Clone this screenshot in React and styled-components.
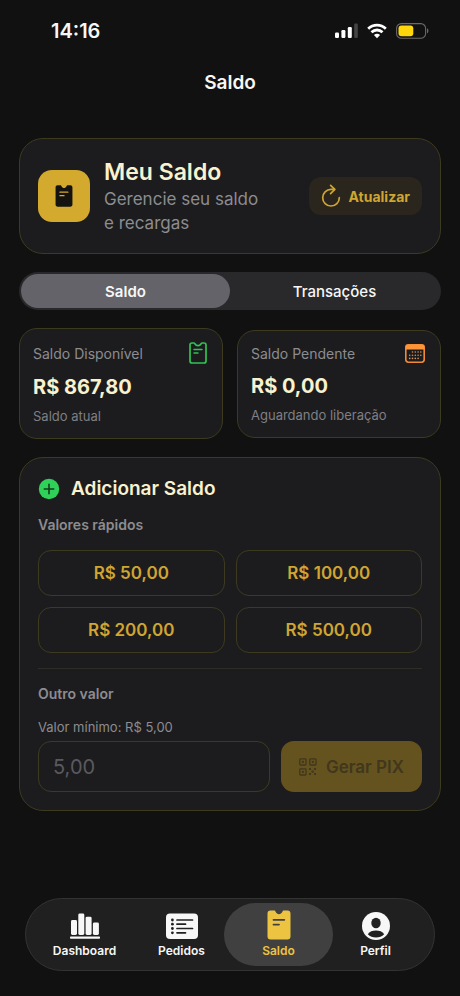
import React, { useState } from 'react'
import styled, { createGlobalStyle, ThemeProvider } from 'styled-components';

const theme = {
  body: '#111111',
  card: '#1c1c1e',
  line: '#3d3a20',
  gold: '#d0a531',
  cream: '#f8f2cf',
  muted: '#8c8c91',
  text: '#f7f7f7',
}

const GlobalStyle = createGlobalStyle`
*, *::before, *::after {
  box-sizing: border-box;
}

body {
  margin: 0;
  background-color: #111111;
  font-family: Inter, Roboto, sans-serif;
}

h1, h2, p {
  margin: 0;
}

button, input {
  font-family: inherit;
}
`

const Page = styled.div`
min-height: 100vh;
display: flex;
flex-direction: column;
background-color: ${props => props.theme.body};
color: ${props => props.theme.text};
`

const StatusBar = styled.div`
height: 62px;
padding: 0 31px 0 51px;
display: flex;
align-items: center;
justify-content: space-between;
`

const Time = styled.span`
font-size: 20px;
font-weight: 600;
`

const StatusIcons = styled.div`
display: flex;
align-items: center;
gap: 9px;

svg {
  display: block;
}
`

const Header = styled.header`
height: 40px;
display: flex;
align-items: center;
justify-content: center;
`

const PageTitle = styled.h1`
font-size: 19px;
font-weight: 600;
`

const Main = styled.main`
padding: 36px 19px 40px;
display: flex;
flex-direction: column;
gap: 18px;
`

const Card = styled.section`
background-color: ${props => props.theme.card};
border: 1px solid ${props => props.theme.line};
border-radius: 24px;
padding: 18px;
`

const BalanceCard = styled(Card)`
display: flex;
align-items: center;
gap: 14px;
`

const IconTile = styled.div`
width: 52px;
height: 52px;
flex: none;
display: flex;
align-items: center;
justify-content: center;
border-radius: 14px;
background-color: #d3aa2e;
color: #14130f;
`

const BalanceText = styled.div`
flex: 1;
min-width: 0;
`

const BalanceTitle = styled.h2`
font-size: 23px;
line-height: 30px;
font-weight: 600;
color: ${props => props.theme.cream};
`

const BalanceInfo = styled.p`
max-width: 160px;
font-size: 17px;
line-height: 24px;
color: ${props => props.theme.muted};
`

const RefreshButton = styled.button`
height: 38px;
padding: 0 12px;
display: flex;
align-items: center;
gap: 8px;
flex: none;
border: 0;
border-radius: 12px;
background-color: #2a261d;
color: ${props => props.theme.gold};
font-size: 14px;
font-weight: 700;
cursor: pointer;
`

const Segments = styled.div`
height: 38px;
padding: 2px;
display: grid;
grid-template-columns: 1fr 1fr;
border-radius: 19px;
background-color: #29292b;
`

const Segment = styled.button`
border: 0;
border-radius: 17px;
background-color: ${props => props.$active ? '#646369' : 'transparent'};
color: ${props => props.theme.text};
font-size: 15px;
font-weight: ${props => props.$active ? 600 : 500};
cursor: pointer;
`

const Stats = styled.div`
display: grid;
grid-template-columns: 1fr 1fr;
align-items: center;
gap: 14px;
`

const StatCard = styled(Card)`
border-radius: 18px;
padding: 13px;
`

const StatTop = styled.div`
display: flex;
align-items: center;
justify-content: space-between;
color: ${props => props.theme.muted};
font-size: 14px;

svg {
  display: block;
  margin-right: 2px;
}
`

const StatValue = styled.p`
margin-top: 10px;
font-size: 20px;
line-height: 26px;
font-weight: 700;
color: ${props => props.theme.cream};
`

const StatNote = styled.p`
margin-top: 7px;
font-size: 13px;
line-height: 18px;
color: #7f7f84;
`

const AddTitle = styled.h2`
margin-bottom: 14px;
display: flex;
align-items: center;
gap: 11px;
font-size: 19px;
line-height: 26px;
font-weight: 600;
color: ${props => props.theme.cream};
`

const Subtitle = styled.p`
font-size: 14px;
line-height: 18px;
font-weight: 600;
color: ${props => props.theme.muted};
`

const QuickValues = styled.div`
margin-top: 16px;
display: grid;
grid-template-columns: 1fr 1fr;
gap: 11px;
`

const QuickButton = styled.button`
height: 46px;
border: 1px solid ${props => props.theme.line};
border-radius: 13px;
background-color: transparent;
color: ${props => props.theme.gold};
font-size: 17px;
font-weight: 600;
cursor: pointer;
`

const Divider = styled.hr`
margin: 15px 0 16px;
border: 0;
border-top: 1px solid #2e2d28;
`

const MinLabel = styled.label`
display: block;
margin: 15px 0 5px;
font-size: 13px;
line-height: 18px;
color: ${props => props.theme.muted};
`

const PixRow = styled.div`
display: flex;
gap: 11px;
`

const ValueInput = styled.input`
flex: 1;
min-width: 0;
height: 51px;
padding: 0 14px;
border: 1px solid ${props => props.theme.line};
border-radius: 13px;
background-color: transparent;
color: ${props => props.theme.text};
font-size: 20px;

&::placeholder {
  color: #5a5a5e;
  opacity: 1;
}
`

const PixButton = styled.button`
flex: none;
padding: 0 18px;
display: flex;
align-items: center;
gap: 9px;
border: 0;
border-radius: 13px;
background-color: #65531f;
color: #40371c;
font-size: 17px;
font-weight: 600;
`

const TabBar = styled.nav`
margin: auto 25px 25px;
padding: 4px 10px;
display: grid;
grid-template-columns: repeat(4, 1fr);
border: 1px solid #333333;
border-radius: 37px;
background-color: #202020;
`

const Tab = styled.a`
height: 63px;
margin: 0 -6px;
padding-bottom: 7px;
display: flex;
flex-direction: column;
align-items: center;
justify-content: flex-end;
gap: 3px;
border-radius: 32px;
background-color: ${props => props.$active ? '#404040' : 'transparent'};
color: ${props => props.$active ? '#ecc442' : props.theme.text};
font-size: 12px;
line-height: 16px;
font-weight: 600;
text-decoration: none;
`

const SignalIcon = () => (
  <svg width="23" height="16" viewBox="0 0 23 16" fill="#fff">
    <rect x="0" y="9.5" width="4" height="5.5" rx="1.2" />
    <rect x="6.4" y="7" width="4" height="8" rx="1.2" />
    <rect x="12.8" y="4" width="4" height="11" rx="1.2" />
    <rect x="19.2" y="0.5" width="3.6" height="14.5" rx="1.2" fill="#444" />
  </svg>
)

const WifiIcon = () => (
  <svg width="20" height="16" viewBox="0 0 20 16" fill="none" stroke="#fff" strokeWidth="2.8">
    <path d="M1.2 5.7C6.2 0.8 13.8 0.8 18.8 5.7" />
    <path d="M4.5 9.3C7.7 6.2 12.3 6.2 15.5 9.3" />
    <path d="M10 15.2L6.9 12C8.6 10.3 11.4 10.3 13.1 12Z" fill="#fff" stroke="none" />
  </svg>
)

const BatteryIcon = () => (
  <svg width="33" height="16" viewBox="0 0 33 16">
    <rect x="0.6" y="0.6" width="29" height="14.6" rx="4.8" fill="none" stroke="#69696b" strokeWidth="1.1" />
    <rect x="2.5" y="2.5" width="14.8" height="10.8" rx="3" fill="#fdd60b" />
    <path d="M31 5.3C32.9 6 32.9 9.7 31 10.4Z" fill="#69696b" />
  </svg>
)

const TicketIcon = ({ width, height, lines }) => (
  <svg width={width} height={height} viewBox="0 0 24 30">
    <path d="M3.5 0.5H7.2C8 0.5 8.3 1 8.6 1.8C9.9 5 14.1 5 15.4 1.8C15.7 1 16 0.5 16.8 0.5H20.5C22.4 0.5 23.5 1.6 23.5 3.5V26.5C23.5 28.4 22.4 29.5 20.5 29.5H3.5C1.6 29.5 0.5 28.4 0.5 26.5V3.5C0.5 1.6 1.6 0.5 3.5 0.5Z" fill="currentColor" />
    <path d="M6.5 9.8H17.3M6.5 14.6H12" stroke={lines} strokeWidth="1.8" strokeLinecap="round" />
  </svg>
)

const TicketOutlineIcon = () => (
  <svg width="18" height="22" viewBox="0 0 18 22" fill="none" stroke="#2fc254" strokeLinecap="round" strokeLinejoin="round">
    <path d="M3 1H4.9C5.6 1 5.8 1.5 6.1 2C7.3 4.2 10.7 4.2 11.9 2C12.2 1.5 12.4 1 13.1 1H15C16.3 1 17 1.7 17 3V19C17 20.3 16.3 21 15 21H3C1.7 21 1 20.3 1 19V3C1 1.7 1.7 1 3 1Z" strokeWidth="1.7" />
    <path d="M5 7.5H13M5 11H9" strokeWidth="1.4" />
  </svg>
)

const CalendarIcon = () => (
  <svg width="20" height="19" viewBox="0 0 20 19">
    <rect x="0.8" y="0.8" width="18.4" height="17.4" rx="2.6" fill="none" stroke="#f08a36" strokeWidth="1.6" />
    <path d="M0.5 5.6V3.2C0.5 1.4 1.5 0.4 3.3 0.4H16.7C18.5 0.4 19.5 1.4 19.5 3.2V5.6Z" fill="#ff9338" />
    <g fill="#d8925a">
      {[7.5, 10.3, 13.1, 15.8].map((x) => <circle key={`a${x}`} cx={x} cy="8" r="0.8" />)}
      {[4.7, 7.5, 10.3, 13.1, 15.8].map((x) => <circle key={`b${x}`} cx={x} cy="11.2" r="0.8" />)}
      {[4.7, 7.5, 10.3, 13.1].map((x) => <circle key={`c${x}`} cx={x} cy="14.4" r="0.8" />)}
    </g>
  </svg>
)

const RefreshIcon = () => (
  <svg width="20" height="24" viewBox="0 0 20 24" fill="none" stroke="currentColor" strokeWidth="1.7" strokeLinecap="round" strokeLinejoin="round">
    <path d="M18.3 13.7A8.3 8.3 0 1 1 10 5.4H13.4" />
    <path d="M9.6 1.3L13.8 5.4L9.6 9.6" />
  </svg>
)

const PlusIcon = () => (
  <svg width="22" height="22" viewBox="0 0 22 22">
    <circle cx="11" cy="11" r="10.2" fill="#30d158" />
    <path d="M11 6.3V15.7M6.3 11H15.7" stroke="#123c1c" strokeWidth="1.6" strokeLinecap="round" />
  </svg>
)

const QrIcon = () => (
  <svg width="18" height="18" viewBox="0 0 18 18" fill="currentColor">
    {[[0, 0], [10, 0], [0, 10]].map(([x, y]) => (
      <g key={`${x}-${y}`}>
        <rect x={x + 0.8} y={y + 0.8} width="6.2" height="6.2" rx="0.8" fill="none" stroke="currentColor" strokeWidth="1.3" />
        <rect x={x + 2.9} y={y + 2.9} width="2" height="2" />
      </g>
    ))}
    <rect x="10" y="10" width="2" height="2" />
    <rect x="15" y="10" width="2" height="2" />
    <rect x="12.5" y="12.5" width="2.2" height="2.2" />
    <rect x="10" y="15" width="2" height="2" />
    <rect x="15" y="15" width="2" height="2" />
  </svg>
)

const ChartIcon = () => (
  <svg width="30" height="28" viewBox="0 0 30 28" fill="currentColor">
    <rect x="1" y="8" width="6" height="15" rx="1.4" />
    <rect x="8.3" y="1.5" width="6" height="21.5" rx="1.4" />
    <rect x="15.6" y="4.7" width="6" height="18.3" rx="1.4" />
    <rect x="22.9" y="10.5" width="6" height="12.5" rx="1.4" />
    <rect x="0" y="24.6" width="30" height="2.2" rx="0.7" />
  </svg>
)

const ListIcon = () => (
  <svg width="32" height="28" viewBox="0 0 32 28">
    <rect x="0" y="1.5" width="32" height="25.5" rx="4" fill="currentColor" />
    <g stroke="#202020" strokeWidth="1.7" strokeLinecap="round">
      <path d="M11 8H26.5M11 12.2H19.5M11 16.5H26.5M11 20.8H19.5" />
    </g>
    <g fill="#202020">
      {[8, 12.2, 16.5, 20.8].map((y) => <circle key={y} cx="6.4" cy={y} r="1.4" />)}
    </g>
  </svg>
)

const PersonIcon = () => (
  <svg width="28" height="28" viewBox="0 0 28 28">
    <circle cx="14" cy="14" r="14" fill="currentColor" />
    <ellipse cx="14" cy="11" rx="4.7" ry="5.3" fill="#202020" />
    <path d="M5.8 22.3C7.6 19.5 10.6 18.5 14 18.5S20.4 19.5 22.2 22.3C20 24.4 17.2 25.5 14 25.5S8 24.4 5.8 22.3Z" fill="#202020" />
  </svg>
)

const StatComponent = ({ label, value, note, icon }) => (
  <StatCard>
    <StatTop>
      <span>{label}</span>
      {icon}
    </StatTop>
    <StatValue>{value}</StatValue>
    <StatNote>{note}</StatNote>
  </StatCard>
)

const TabComponent = ({ href, label, active, children }) => (
  <Tab href={href} $active={active} aria-current={active ? 'page' : undefined}>
    {children}
    <span>{label}</span>
  </Tab>
)

const App = () => {
  const [segment, setSegment] = useState('Saldo')
  const [value, setValue] = useState('')

  return (
    <ThemeProvider theme={theme}>
      <GlobalStyle />
      <Page>
        <StatusBar>
          <Time>14:16</Time>
          <StatusIcons>
            <SignalIcon />
            <WifiIcon />
            <BatteryIcon />
          </StatusIcons>
        </StatusBar>
        <Header>
          <PageTitle>Saldo</PageTitle>
        </Header>
        <Main>
          <BalanceCard>
            <IconTile>
              <TicketIcon width={18} height={22} lines="#d3aa2e" />
            </IconTile>
            <BalanceText>
              <BalanceTitle>Meu Saldo</BalanceTitle>
              <BalanceInfo>Gerencie seu saldo e recargas</BalanceInfo>
            </BalanceText>
            <RefreshButton type="button">
              <RefreshIcon />
              Atualizar
            </RefreshButton>
          </BalanceCard>

          <Segments>
            {['Saldo', 'Transações'].map((name) => (
              <Segment
                key={name}
                type="button"
                $active={segment === name}
                aria-pressed={segment === name}
                onClick={() => setSegment(name)}
              >
                {name}
              </Segment>
            ))}
          </Segments>

          <Stats>
            <StatComponent label="Saldo Disponível" value="R$ 867,80" note="Saldo atual" icon={<TicketOutlineIcon />} />
            <StatComponent label="Saldo Pendente" value="R$ 0,00" note="Aguardando liberação" icon={<CalendarIcon />} />
          </Stats>

          <Card>
            <AddTitle>
              <PlusIcon />
              Adicionar Saldo
            </AddTitle>
            <Subtitle>Valores rápidos</Subtitle>
            <QuickValues>
              {['50,00', '100,00', '200,00', '500,00'].map((amount) => (
                <QuickButton key={amount} type="button" onClick={() => setValue(amount)}>
                  R$ {amount}
                </QuickButton>
              ))}
            </QuickValues>
            <Divider />
            <Subtitle>Outro valor</Subtitle>
            <MinLabel htmlFor="valor">Valor mínimo: R$ 5,00</MinLabel>
            <PixRow>
              <ValueInput
                id="valor"
                inputMode="decimal"
                placeholder="5,00"
                value={value}
                onChange={(e) => setValue(e.target.value)}
              />
              <PixButton type="button" disabled={!value}>
                <QrIcon />
                Gerar PIX
              </PixButton>
            </PixRow>
          </Card>
        </Main>

        <TabBar>
          <TabComponent href="#dashboard" label="Dashboard"><ChartIcon /></TabComponent>
          <TabComponent href="#pedidos" label="Pedidos"><ListIcon /></TabComponent>
          <TabComponent href="#saldo" label="Saldo" active>
            <TicketIcon width={24} height={30} lines="#404040" />
          </TabComponent>
          <TabComponent href="#perfil" label="Perfil"><PersonIcon /></TabComponent>
        </TabBar>
      </Page>
    </ThemeProvider>
  )
}

export default App
